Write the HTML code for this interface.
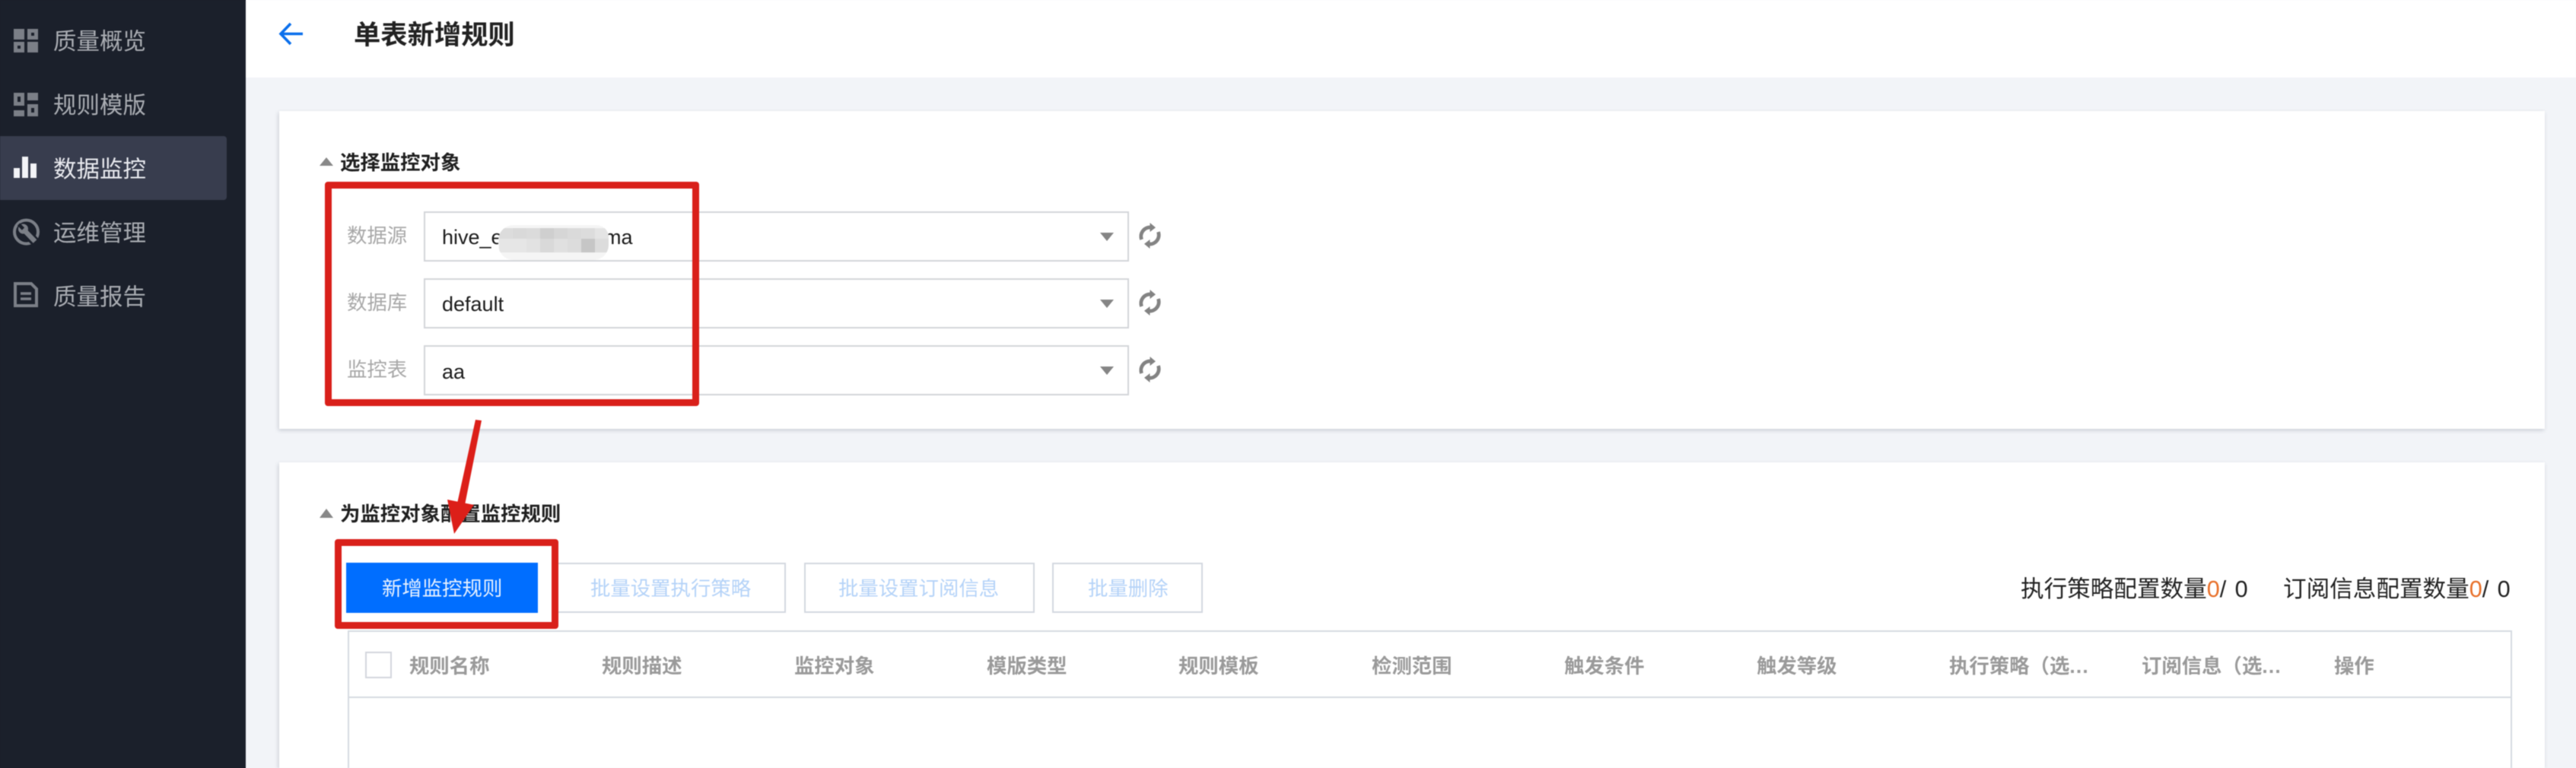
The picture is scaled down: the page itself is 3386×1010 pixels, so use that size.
<!DOCTYPE html>
<html lang="zh-CN">
<head>
<meta charset="utf-8">
<title>单表新增规则</title>
<style>
html,body{margin:0;padding:0;width:3386px;height:1010px;overflow:hidden}
body{background:linear-gradient(90deg,#1b202b 323px,#f2f4f8 323px)}
#root{position:relative;width:3386px;height:1010px;overflow:hidden;background:#f2f4f8;font-family:"Liberation Sans","Noto Sans CJK SC",sans-serif;filter:blur(.5px)}
.a{position:absolute}
.t{position:absolute;white-space:nowrap;height:40px;line-height:40px;font-size:26.4px}
.side{left:0;top:0;width:323px;height:1010px;background:#1b202b}
.nav{left:70px;font-size:30.5px;color:#a9acb2}
.card{background:#fff;left:367px;width:2978px;box-shadow:-1px 2px 5px rgba(60,70,90,.22)}
.h2{font-weight:700;color:#1f1f1f;font-size:26.4px}
.lab{left:456px;color:#a8a8a8}
.inp{left:557px;width:923px;height:62px;border:2px solid #d3d5d9;background:#fff}
.val{left:581px;font-size:27px;color:#1c1c1c}
.tri{width:0;height:0;border-left:9px solid transparent;border-right:9px solid transparent}
.btn{top:740px;height:62px;border:2px solid #d3d8e0;background:#fff}
.dis{color:#b5d3f8}
.th{top:856px;color:#9a9a9a;font-weight:700}
.red{border:9px solid #d9201a;border-radius:4px;box-sizing:border-box}
.m{position:absolute;width:18px}
.dots{letter-spacing:1.2px}
.tail{letter-spacing:1.4px}
</style>
</head>
<body>
<div id="root">

<!-- sidebar -->
<div class="a side"></div>
<div class="a" style="left:0;top:179px;width:298px;height:84px;background:#383d4e;border-radius:0 4px 4px 0"></div>

<svg class="a" style="left:0;top:0" width="323" height="420" viewBox="0 0 323 420">
  <g fill="#7b7f87">
    <rect x="18" y="38" width="14" height="14"/>
    <path fill-rule="evenodd" d="M36 38h14v14H36zM41 43v4h4v-4z"/>
    <path fill-rule="evenodd" d="M18 55h14v14H18zM23 60v4h4v-4z"/>
    <rect x="36" y="55" width="14" height="14"/>
    <path fill-rule="evenodd" d="M18 122h14v17H18zM23 127v7h4v-7z"/>
    <rect x="36" y="122" width="14" height="10"/>
    <rect x="18" y="145" width="14" height="8"/>
    <path fill-rule="evenodd" d="M36 137h14v16H36zM41 142v6h4v-6z"/>
  </g>
  <g fill="#f3f4f7">
    <rect x="18" y="221" width="8" height="13"/>
    <rect x="29" y="206" width="8" height="28"/>
    <rect x="40" y="215" width="8" height="19"/>
  </g>
  <circle cx="34.500" cy="305" r="15.500" fill="none" stroke="#7b7f87" stroke-width="4"/>
  <path d="M33 304 47 319" stroke="#1b202b" stroke-width="12" fill="none"/>
  <path d="M33 304 46 317.500" stroke="#7b7f87" stroke-width="6.500" fill="none"/>
  <circle cx="30.500" cy="301" r="6.500" fill="#7b7f87"/>
  <path d="M24.500 295 30.500 301" stroke="#1b202b" stroke-width="4.500" fill="none"/>
  <path d="M20 378v24h28v-22l-7-7H20z" fill="none" stroke="#7b7f87" stroke-width="4"/>
  <path d="M27 386h14M27 393h14" stroke="#7b7f87" stroke-width="3.500" fill="none"/>
</svg>

<div class="t nav" style="top:35px">质量概览</div>
<div class="t nav" style="top:119px">规则模版</div>
<div class="t nav" style="top:203px;color:#e9eaef">数据监控</div>
<div class="t nav" style="top:287px">运维管理</div>
<div class="t nav" style="top:371px">质量报告</div>

<!-- header -->
<div class="a" style="left:323px;top:0;width:3063px;height:102px;background:#fff"></div>
<svg class="a" style="left:365px;top:28px" width="36" height="34" viewBox="0 0 36 34">
  <path d="M33 16.500H5M17 3 4 16.500 17 30" fill="none" stroke="#0a6fec" stroke-width="3.600"/>
</svg>
<div class="t" style="left:465px;top:27px;font-size:35.300px;font-weight:700;color:#222">单表新增规则</div>

<!-- card 1 -->
<div class="a card" style="top:146px;height:418px"></div>
<div class="a tri" style="left:420px;top:207px;border-bottom:11px solid #888"></div>
<div class="t h2" style="left:447px;top:194px">选择监控对象</div>

<div class="t lab" style="top:290px">数据源</div>
<div class="t lab" style="top:378px">数据库</div>
<div class="t lab" style="top:466px">监控表</div>

<div class="a inp" style="top:278px"></div>
<div class="a inp" style="top:366px"></div>
<div class="a inp" style="top:454px"></div>

<div class="t val" style="top:292px">hive_e</div>
<div class="t val" style="top:292px;left:794px">ma</div>
<div class="t val" style="top:380px">default</div>
<div class="t val" style="top:469px">aa</div>

<!-- mosaic blur -->
<div class="a" style="left:655px;top:296px;width:145px;height:46px;overflow:hidden;border-radius:20px 16px 20px 20px;background:#f5f5f5">
  <div class="m" style="left:1px;top:4px;height:14px;background:#dcdcdc"></div>
  <div class="m" style="left:19px;top:4px;height:14px;background:#d9d9d9"></div>
  <div class="m" style="left:37px;top:4px;height:14px;background:#dbdbdb"></div>
  <div class="m" style="left:55px;top:4px;height:14px;background:#cfcfcf"></div>
  <div class="m" style="left:73px;top:4px;height:14px;background:#d6d6d6"></div>
  <div class="m" style="left:91px;top:4px;height:14px;background:#dadada"></div>
  <div class="m" style="left:109px;top:4px;height:14px;background:#dcdcdc"></div>
  <div class="m" style="left:127px;top:4px;height:14px;background:#e4e4e4"></div>
  <div class="m" style="left:1px;top:18px;height:18px;background:#e6e6e6"></div>
  <div class="m" style="left:19px;top:18px;height:18px;background:#e6e6e6"></div>
  <div class="m" style="left:37px;top:18px;height:18px;background:#e2e2e2"></div>
  <div class="m" style="left:55px;top:18px;height:18px;background:#d9d9d9"></div>
  <div class="m" style="left:73px;top:18px;height:18px;background:#e0e0e0"></div>
  <div class="m" style="left:91px;top:18px;height:18px;background:#dcdcdc"></div>
  <div class="m" style="left:109px;top:18px;height:18px;background:#c6c6c6"></div>
  <div class="m" style="left:127px;top:18px;height:18px;background:#dcdcdc"></div>
</div>

<!-- dropdown arrows and refresh -->
<div class="a tri" style="left:1446px;top:306px;border-top:11px solid #858585"></div>
<div class="a tri" style="left:1446px;top:394px;border-top:11px solid #858585"></div>
<div class="a tri" style="left:1446px;top:482px;border-top:11px solid #858585"></div>

<svg class="a" style="left:1495px;top:292px" width="32" height="36" viewBox="0 0 32 36">
  <path d="M5.500 23A12 12 0 0 1 18 7" fill="none" stroke="#838383" stroke-width="4.800"/><path d="M16.500 1 24 7.200 16.500 13z" fill="#838383"/><path d="M27.500 13A12 12 0 0 1 15 29" fill="none" stroke="#838383" stroke-width="4.800"/><path d="M16.500 23 9 28.800 16.500 35z" fill="#838383"/>
</svg>
<svg class="a" style="left:1495px;top:380px" width="32" height="36" viewBox="0 0 32 36">
  <path d="M5.500 23A12 12 0 0 1 18 7" fill="none" stroke="#838383" stroke-width="4.800"/><path d="M16.500 1 24 7.200 16.500 13z" fill="#838383"/><path d="M27.500 13A12 12 0 0 1 15 29" fill="none" stroke="#838383" stroke-width="4.800"/><path d="M16.500 23 9 28.800 16.500 35z" fill="#838383"/>
</svg>
<svg class="a" style="left:1495px;top:468px" width="32" height="36" viewBox="0 0 32 36">
  <path d="M5.500 23A12 12 0 0 1 18 7" fill="none" stroke="#838383" stroke-width="4.800"/><path d="M16.500 1 24 7.200 16.500 13z" fill="#838383"/><path d="M27.500 13A12 12 0 0 1 15 29" fill="none" stroke="#838383" stroke-width="4.800"/><path d="M16.500 23 9 28.800 16.500 35z" fill="#838383"/>
</svg>

<!-- card 2 -->
<div class="a card" style="top:608px;height:402px"></div>
<div class="a tri" style="left:420px;top:669px;border-bottom:12px solid #888"></div>
<div class="t h2" style="left:447px;top:656px">为监控对象配置监控规则</div>

<div class="a" style="left:455px;top:740px;width:252px;height:66px;background:#006eff"></div>
<div class="t" style="left:502px;top:754px;color:#e8f1ff">新增监控规则</div>

<div class="a btn" style="left:730px;width:299px"></div>
<div class="t dis" style="left:776px;top:754px">批量设置执行策略</div>
<div class="a btn" style="left:1057px;width:299px"></div>
<div class="t dis" style="left:1102px;top:754px">批量设置订阅信息</div>
<div class="a btn" style="left:1383px;width:194px"></div>
<div class="t dis" style="left:1430px;top:754px">批量删除</div>

<div class="t" style="left:2656px;top:755px;font-size:30.600px;color:#222">执行策略配置数量<span style="color:#e8702a">0</span><span class="tail">/ 0</span></div>
<div class="t" style="left:3001px;top:755px;font-size:30.600px;color:#222">订阅信息配置数量<span style="color:#e8702a">0</span><span class="tail">/ 0</span></div>

<!-- table -->
<div class="a" style="left:457px;top:829px;width:2841px;height:179px;border:2px solid #d5dae1;border-bottom:0;background:#fff"></div>
<div class="a" style="left:457px;top:916px;width:2843px;height:2px;background:#d5dae1"></div>
<div class="a" style="left:480px;top:857px;width:31px;height:31px;border:2px solid #d3d6dc;background:#fff"></div>

<div class="t th" style="left:538px">规则名称</div>
<div class="t th" style="left:791px">规则描述</div>
<div class="t th" style="left:1044px">监控对象</div>
<div class="t th" style="left:1297px">模版类型</div>
<div class="t th" style="left:1549px">规则模板</div>
<div class="t th" style="left:1803px">检测范围</div>
<div class="t th" style="left:2056px">触发条件</div>
<div class="t th" style="left:2309px">触发等级</div>
<div class="t th" style="left:2562px">执行策略（选<span class="dots">...</span></div>
<div class="t th" style="left:2815px">订阅信息（选<span class="dots">...</span></div>
<div class="t th" style="left:3068px">操作</div>

<!-- red annotations -->
<div class="a red" style="left:427px;top:239px;width:492px;height:295px"></div>
<div class="a red" style="left:440px;top:709px;width:294px;height:118px"></div>
<svg class="a" style="left:0;top:0" width="800" height="720" viewBox="0 0 800 720">
  <polygon points="625,552 633,553 611,664 601,662" fill="#dc1f19"/>
  <polygon points="597,702 588,657 623,664" fill="#dc1f19"/>
</svg>

</div>
</body>
</html>
